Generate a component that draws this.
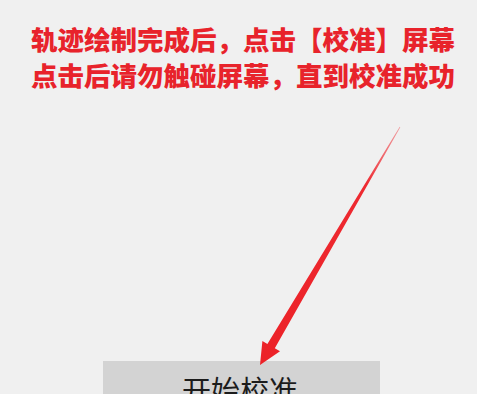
export default function App() {
  return (
    <div className="relative w-full h-[394px] overflow-hidden bg-[#f0f0f0] font-['Noto_Sans_CJK_SC',sans-serif]">
      <div className="pt-[21px] pl-[31px] text-[26.5px] leading-[36px] font-black text-[#e8232b]">
        <p>轨迹绘制完成后，点击【校准】屏幕</p>
        <p>点击后请勿触碰屏幕，直到校准成功</p>
      </div>

      <div className="mt-[268px] ml-[103px] w-[277px] h-[60px] bg-[#d3d3d3] pt-[8px] pl-[79px] text-[29px] leading-[40px] text-[#1c1c1c]">
        开始校准
      </div>

      {/* pointer arrow */}
      <svg className="absolute left-0 top-0" width="477" height="394" viewBox="0 0 477 394">
        <defs>
          <linearGradient id="shaft" x1="400" y1="127" x2="265" y2="355" gradientUnits="userSpaceOnUse">
            <stop offset="0" stopColor="#f04a50" stopOpacity="0.5" />
            <stop offset="0.25" stopColor="#ee2a31" />
            <stop offset="1" stopColor="#ec2228" />
          </linearGradient>
        </defs>
        <polygon
          points="400.3,127.2 399.7,126.8 267.4,344 262.4,341 260,365 280,351.3 274.8,348.3"
          fill="url(#shaft)"
        />
      </svg>
    </div>
  );
}
